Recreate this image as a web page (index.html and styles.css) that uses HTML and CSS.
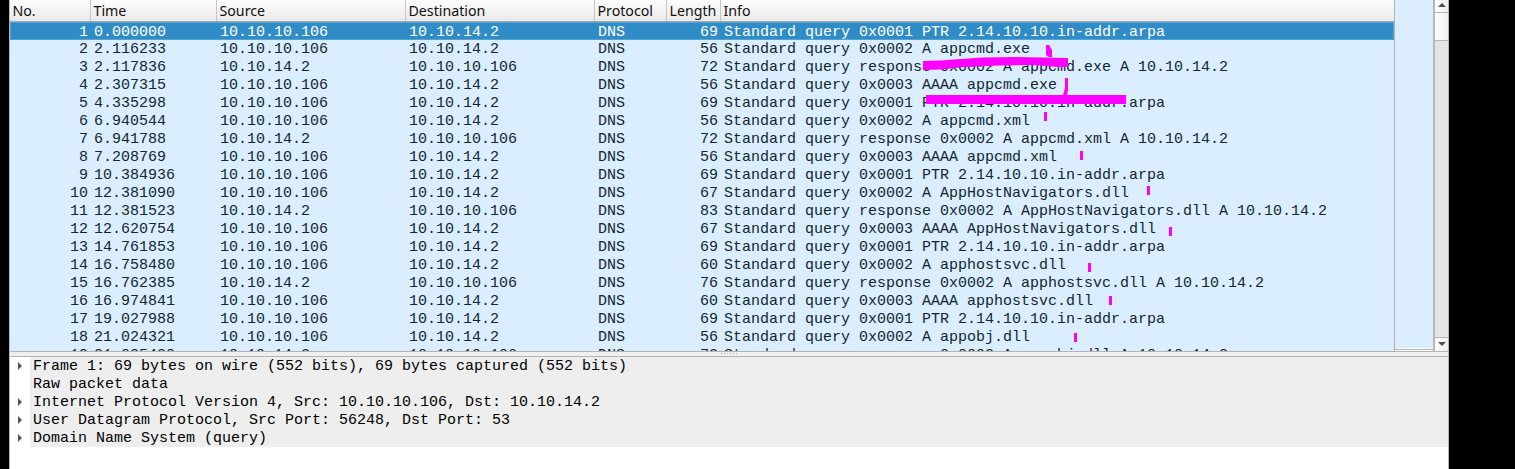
FILE: index.html
```html
<!DOCTYPE html>
<html lang="en">
<head>
<meta charset="utf-8">
<title>Packet capture</title>
<link rel="stylesheet" href="styles.css">
</head>
<body>
<main class="window">
  <section class="packets">
    <div class="list">
      <div class="row head"><span>No.</span><span>Time</span><span>Source</span><span>Destination</span><span>Protocol</span><span>Length</span><span>Info</span></div>
      <div class="row selected"><span>1</span><span>0.000000</span><span>10.10.10.106</span><span>10.10.14.2</span><span>DNS</span><span>69</span><span>Standard query 0x0001 PTR 2.14.10.10.in-addr.arpa</span></div>
      <div class="row"><span>2</span><span>2.116233</span><span>10.10.10.106</span><span>10.10.14.2</span><span>DNS</span><span>56</span><span>Standard query 0x0002 A appcmd.exe</span></div>
      <div class="row"><span>3</span><span>2.117836</span><span>10.10.14.2</span><span>10.10.10.106</span><span>DNS</span><span>72</span><span>Standard query response 0x0002 A appcmd.exe A 10.10.14.2</span></div>
      <div class="row"><span>4</span><span>2.307315</span><span>10.10.10.106</span><span>10.10.14.2</span><span>DNS</span><span>56</span><span>Standard query 0x0003 AAAA appcmd.exe</span></div>
      <div class="row"><span>5</span><span>4.335298</span><span>10.10.10.106</span><span>10.10.14.2</span><span>DNS</span><span>69</span><span>Standard query 0x0001 PTR 2.14.10.10.in-addr.arpa</span></div>
      <div class="row"><span>6</span><span>6.940544</span><span>10.10.10.106</span><span>10.10.14.2</span><span>DNS</span><span>56</span><span>Standard query 0x0002 A appcmd.xml</span></div>
      <div class="row"><span>7</span><span>6.941788</span><span>10.10.14.2</span><span>10.10.10.106</span><span>DNS</span><span>72</span><span>Standard query response 0x0002 A appcmd.xml A 10.10.14.2</span></div>
      <div class="row"><span>8</span><span>7.208769</span><span>10.10.10.106</span><span>10.10.14.2</span><span>DNS</span><span>56</span><span>Standard query 0x0003 AAAA appcmd.xml</span></div>
      <div class="row"><span>9</span><span>10.384936</span><span>10.10.10.106</span><span>10.10.14.2</span><span>DNS</span><span>69</span><span>Standard query 0x0001 PTR 2.14.10.10.in-addr.arpa</span></div>
      <div class="row"><span>10</span><span>12.381090</span><span>10.10.10.106</span><span>10.10.14.2</span><span>DNS</span><span>67</span><span>Standard query 0x0002 A AppHostNavigators.dll</span></div>
      <div class="row"><span>11</span><span>12.381523</span><span>10.10.14.2</span><span>10.10.10.106</span><span>DNS</span><span>83</span><span>Standard query response 0x0002 A AppHostNavigators.dll A 10.10.14.2</span></div>
      <div class="row"><span>12</span><span>12.620754</span><span>10.10.10.106</span><span>10.10.14.2</span><span>DNS</span><span>67</span><span>Standard query 0x0003 AAAA AppHostNavigators.dll</span></div>
      <div class="row"><span>13</span><span>14.761853</span><span>10.10.10.106</span><span>10.10.14.2</span><span>DNS</span><span>69</span><span>Standard query 0x0001 PTR 2.14.10.10.in-addr.arpa</span></div>
      <div class="row"><span>14</span><span>16.758480</span><span>10.10.10.106</span><span>10.10.14.2</span><span>DNS</span><span>60</span><span>Standard query 0x0002 A apphostsvc.dll</span></div>
      <div class="row"><span>15</span><span>16.762385</span><span>10.10.14.2</span><span>10.10.10.106</span><span>DNS</span><span>76</span><span>Standard query response 0x0002 A apphostsvc.dll A 10.10.14.2</span></div>
      <div class="row"><span>16</span><span>16.974841</span><span>10.10.10.106</span><span>10.10.14.2</span><span>DNS</span><span>60</span><span>Standard query 0x0003 AAAA apphostsvc.dll</span></div>
      <div class="row"><span>17</span><span>19.027988</span><span>10.10.10.106</span><span>10.10.14.2</span><span>DNS</span><span>69</span><span>Standard query 0x0001 PTR 2.14.10.10.in-addr.arpa</span></div>
      <div class="row"><span>18</span><span>21.024321</span><span>10.10.10.106</span><span>10.10.14.2</span><span>DNS</span><span>56</span><span>Standard query 0x0002 A appobj.dll</span></div>
      <div class="row"><span>19</span><span>21.025420</span><span>10.10.14.2</span><span>10.10.10.106</span><span>DNS</span><span>72</span><span>Standard query response 0x0002 A appobj.dll A 10.10.14.2</span></div>
    </div>
    <div class="minimap"></div>
    <div class="scrollbar">
      <div class="step up"><svg width="8" height="4" viewBox="0 0 8 4"><path d="M0 4L4 0L8 4Z" fill="#4d4d4d"/></svg></div>
      <div class="thumb"></div>
      <div class="track"></div>
      <div class="step down"><svg width="8" height="4" viewBox="0 0 8 4"><path d="M0 0L4 4L8 0Z" fill="#4d4d4d"/></svg></div>
    </div>
  </section>
  <div class="splitter"><i></i><i></i><i></i><i></i><i></i><i></i></div>
  <section class="details">
    <div class="node"><svg class="arrow" viewBox="0 0 4 8"><path d="M0 0L4 4L0 8Z"/></svg><span>Frame 1: 69 bytes on wire (552 bits), 69 bytes captured (552 bits)</span></div>
    <div class="node"><i class="arrow"></i><span>Raw packet data</span></div>
    <div class="node"><svg class="arrow" viewBox="0 0 4 8"><path d="M0 0L4 4L0 8Z"/></svg><span>Internet Protocol Version 4, Src: 10.10.10.106, Dst: 10.10.14.2</span></div>
    <div class="node"><svg class="arrow" viewBox="0 0 4 8"><path d="M0 0L4 4L0 8Z"/></svg><span>User Datagram Protocol, Src Port: 56248, Dst Port: 53</span></div>
    <div class="node"><svg class="arrow" viewBox="0 0 4 8"><path d="M0 0L4 4L0 8Z"/></svg><span>Domain Name System (query)</span></div>
  </section>
</main>
<svg class="ink" width="1515" height="469" viewBox="0 0 1515 469" fill="#f0f">
  <path d="M1046 45H1049L1052 50V57H1049L1046 55Z"/>
  <path d="M923 61L940 60.500L982 57.500L1015 57L1068 58V67H1058L1032 65L1000 65.500L965 67L940 69.500L923 70Z"/>
  <path d="M1065 78H1068V90L1067 95H1063L1065 88Z"/>
  <path d="M926 95H1126V104H926Z"/>
  <path d="M1044 112h3v9h-3zM1080 151h3v9h-3zM1147 186h3v9h-3zM1169 227h3v9h-3zM1088 263h3v9h-3zM1109 296h3v9h-3zM1074 333h3v9h-3z"/>
</svg>
</body>
</html>
```
FILE: styles.css
```css
* {
  box-sizing: border-box;
}

body {
  margin: 0;
  height: 469px;
  overflow: hidden;
  background: #000;
  font: 15px/18px "Liberation Mono", monospace;
}

.window {
  width: 1440px;
  height: 469px;
  margin-left: 9px;
  display: flex;
  flex-direction: column;
  border-left: 1px solid #b4b4b4;
  border-right: 1px solid #b4b4b4;
  background: #fff;
}

.packets {
  height: 352px;
  display: flex;
  border-bottom: 1px solid #b4b4b4;
}

.list {
  width: 1385px;
  overflow: hidden;
  border-right: 1px solid #b0b0b0;
  background: #daeeff;
  color: #12272e;
}

.row {
  height: 18px;
  padding-top: 1px;
  display: grid;
  grid-template-columns: 81px 126px 189px 189px 72px 54px 1fr;
  white-space: pre;
}

.row span {
  padding-left: 3px;
}

.row:not(.head) span:nth-child(1),
.row:not(.head) span:nth-child(6) {
  padding: 0 3px 0 0;
  text-align: right;
}

.row.head {
  height: 22px;
  padding-top: 0;
  border-bottom: 1px solid #a9a9a9;
  background: linear-gradient(#fdfdfd, #e9e9e9);
  color: #111;
  font: 14.2px/21px "Noto Sans", sans-serif;
}

.head span {
  padding-left: 2.5px;
  border-right: 1px solid #c6c6c6;
}

.head span:last-child {
  border-right: 0;
}

.row.selected {
  padding-top: 2px;
  background: #308cc6;
  box-shadow: inset 0 0 0 1px #50a5d4;
  color: #fff;
}

.minimap {
  width: 38px;
  height: 350px;
  border-bottom: 1px solid #b4b4b4;
  background: linear-gradient(#daeeff 348px, #fff 348px);
}

.scrollbar {
  width: 15px;
  display: flex;
  flex-direction: column;
  border-left: 2px solid #b7b7b7;
  background: #e4e4e4;
}

.step {
  height: 13px;
  display: flex;
  justify-content: center;
  border-bottom: 1px solid #b4b4b4;
  background: linear-gradient(90deg, #fff, #f0f0f0);
}

.up {
  padding-top: 3px;
}

.down {
  height: 14px;
  padding-top: 4px;
  border-top: 1px solid #b4b4b4;
  border-bottom: 0;
}

.thumb {
  height: 28px;
  border-bottom: 1px solid #b4b4b4;
  background: linear-gradient(90deg, #fff, #f0f0f0);
}

.track {
  flex: 1;
}

.splitter {
  height: 5px;
  display: flex;
  justify-content: center;
  gap: 2px;
  padding-top: 1px;
  border-bottom: 1px solid #b4b4b4;
  background: #efefef;
}

.splitter i {
  width: 1px;
  height: 1px;
  background: #b0b0b0;
}

.details {
  color: #000;
}

.node {
  height: 18px;
  display: flex;
  white-space: pre;
}

.node span {
  flex: 1;
  padding: 1px 0 0 3px;
  background: #eee;
}

.arrow {
  width: 4px;
  height: 8px;
  flex: none;
  margin: 5px 8px 0;
  fill: #555;
}

.ink {
  position: absolute;
  left: 0;
  top: 0;
  pointer-events: none;
}
```
